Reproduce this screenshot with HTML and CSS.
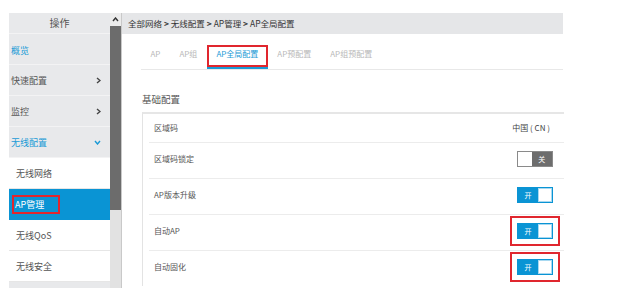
FILE: index.html
```html
<!DOCTYPE html>
<html lang="zh">
<head>
<meta charset="utf-8">
<title>AP全局配置</title>
<link rel="stylesheet" href="styles.css">
</head>
<body>
<div class="page">
  <aside class="sidebar">
    <nav class="menu">
      <div class="menu-head">操作</div>
      <div class="item blue first">概览</div>
      <div class="item">快速配置<svg class="chev" viewBox="0 0 5 7"><polyline points="1,1 4,3.5 1,6"/></svg></div>
      <div class="item">监控<svg class="chev" viewBox="0 0 5 7"><polyline points="1,1 4,3.5 1,6"/></svg></div>
      <div class="item blue">无线配置<svg class="chev down" viewBox="0 0 7 5"><polyline points="1,1 3.5,4 6,1"/></svg></div>
      <div class="sub">无线网络</div>
      <div class="sub active"><span class="hl">AP管理</span></div>
      <div class="sub">无线QoS</div>
      <div class="sub">无线安全</div>
    </nav>
    <div class="scrollbar">
      <div class="arrow"><svg viewBox="0 0 7 5"><polyline points="1,4 3.5,1 6,4"/></svg></div>
      <div class="thumb"></div>
    </div>
  </aside>
  <main class="main">
    <div class="crumb">全部网络 <b>&gt;</b> 无线配置 <b>&gt;</b> AP管理 <b>&gt;</b> AP全局配置</div>
    <div class="tabs">
      <div class="tab">AP</div>
      <div class="tab">AP组</div>
      <div class="tab active"><span class="tab-box">AP全局配置</span></div>
      <div class="tab">AP预配置</div>
      <div class="tab">AP组预配置</div>
    </div>
    <section class="content">
      <div class="section-title">基础配置</div>
      <div class="panel">
        <div class="row first"><span class="label">区域码</span><span class="value">中国 ( CN )</span></div>
        <div class="row"><span class="label">区域码锁定</span><span class="toggle off"><i class="knob"></i><em>关</em></span></div>
        <div class="row"><span class="label">AP版本升级</span><span class="toggle on"><em>开</em><i class="knob"></i></span></div>
        <div class="row"><span class="label">自动AP</span><span class="toggle on marked"><em>开</em><i class="knob"></i></span></div>
        <div class="row"><span class="label">自动固化</span><span class="toggle on marked"><em>开</em><i class="knob"></i></span></div>
      </div>
    </section>
  </main>
</div>
</body>
</html>
```

FILE: styles.css
```css
* { box-sizing: border-box; }
html, body { margin: 0; padding: 0; background: #fff; }
body {
  font-family: "Noto Sans CJK SC", "Noto Sans", sans-serif;
  color: #555;
  width: 627px;
  height: 288px;
  overflow: hidden;
}
.page {
  display: flex;
  padding: 13px 0 0 9px;
  height: 288px;
}
.sidebar {
  display: flex;
  flex: none;
}
.menu {
  width: 101px;
  background: #e8e9eb;
}
.menu-head {
  height: 21px;
  line-height: 20px;
  text-align: center;
  font-size: 10px;
  color: #555;
  border-bottom: 1px solid #f3f3f4;
}
.item {
  height: 31px;
  display: flex;
  align-items: center;
  justify-content: space-between;
  padding: 0 9px 0 2px;
  font-size: 9px;
  color: #555;
  border-bottom: 1px solid #f3f3f4;
}
.item.first { padding-top: 3px; }
.item.blue { color: #1a9ad6; }
.chev {
  width: 5px;
  height: 7px;
  fill: none;
  stroke: #444;
  stroke-width: 1.4;
}
.chev.down {
  width: 7px;
  height: 5px;
  stroke: #1a9ad6;
}
.sub {
  height: 31px;
  display: flex;
  align-items: center;
  padding-left: 7px;
  font-size: 9px;
  color: #555;
  background: #fff;
  border-bottom: 1px solid #e6e6e6;
}
.sub.active {
  background: #0a94d4;
  color: #fff;
  padding-left: 5px;
  border-bottom-color: #0a94d4;
}
.hl {
  display: inline-block;
  width: 44px;
  height: 15px;
  line-height: 15px;
  padding-left: 1px;
  outline: 2px solid #e0262e;
}
.scrollbar {
  width: 12px;
  background: #e2e2e2;
  border-right: 1px solid #c9c9c9;
  display: flex;
  flex-direction: column;
}
.arrow {
  height: 13px;
  display: flex;
  justify-content: center;
  align-items: center;
  background: #ececec;
}
.arrow svg {
  width: 7px;
  height: 5px;
  fill: none;
  stroke: #333;
  stroke-width: 1.4;
}
.thumb {
  height: 184px;
  width: 11px;
  background: #6c6c6c;
}
.main {
  width: 441px;
  flex: none;
}
.crumb {
  height: 21px;
  line-height: 21px;
  background: #e5e6e8;
  padding-left: 6px;
  font-size: 8.5px;
  color: #333;
  white-space: nowrap;
}
.crumb b { font-weight: bold; color: #333; }
.tabs {
  display: flex;
  margin: 11px 0 0 19px;
  border-bottom: 1px solid #e8e8e8;
}
.tab {
  padding: 0 9.5px;
  height: 24px;
  line-height: 17px;
  font-size: 8px;
  color: #b8b8b8;
  border-bottom: 2px solid transparent;
  white-space: nowrap;
}
.tab.active {
  padding: 0;
  color: #1a9ad6;
  border-bottom-color: #1a9ad6;
}
.tab-box {
  display: block;
  height: 22px;
  padding: 0 9.5px;
  line-height: 17px;
  outline: 2px solid #e0262e;
  outline-offset: -2px;
}
.content {
  display: flex;
  flex-direction: column;
  padding: 22px 0 0 20px;
}
.section-title {
  height: 20px;
  font-size: 9.5px;
  line-height: 14px;
  color: #555;
}
.panel {
  width: 422px;
  border-top: 2px solid #e6e6e6;
  border-left: 1px solid #e3e3e3;
  padding-left: 6px;
}
.row {
  height: 36px;
  display: flex;
  align-items: center;
  justify-content: space-between;
  padding: 0 11px 4px 5px;
  border-top: 1px solid #ececec;
  font-size: 8px;
  color: #555;
}
.row.first {
  height: 28px;
  border-top: none;
  padding-bottom: 2px;
}
.value {
  font-size: 8px;
  color: #444;
  padding-right: 3px;
}
.toggle {
  display: flex;
  width: 36px;
  height: 16px;
  font-size: 7px;
}
.toggle em {
  font-style: normal;
  color: #fff;
  width: 21px;
  display: flex;
  align-items: center;
  justify-content: center;
}
.toggle .knob {
  display: block;
  width: 15px;
  height: 16px;
  background: #fff;
}
.toggle.off {
  background: #6d6d6d;
  border: 1px solid #8a8a8a;
}
.toggle.off .knob { height: 14px; width: 14px; }
.toggle.on {
  background: #0a94d4;
  border: 1px solid #0a94d4;
}
.toggle.on .knob {
  height: 14px;
  width: 15px;
  border: 1px solid #a8d9f1;
}
.toggle.marked {
  outline: 2px solid #e0262e;
  outline-offset: 5px;
}
```
